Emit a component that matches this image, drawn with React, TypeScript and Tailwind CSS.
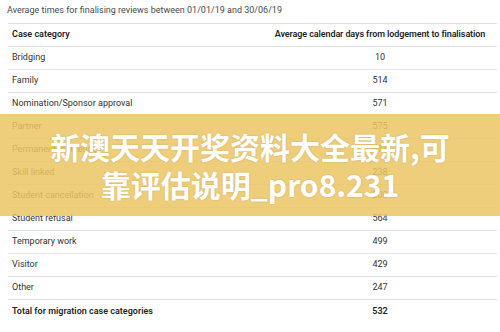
import React from 'react'

const rows: [string, string][] = [
  ['Bridging', '10'],
  ['Family', '514'],
  ['Nomination/Sponsor approval', '571'],
  ['Partner', '575'],
  ['Permanent residence', '471'],
  ['Skill linked', '238'],
  ['Student cancellation', '200'],
  ['Student refusal', '564'],
  ['Temporary work', '499'],
  ['Visitor', '429'],
  ['Other', '247'],
]

export default function App() {
  return (
    <div className="relative w-[500px] h-[332px] overflow-hidden bg-white font-['Roboto',sans-serif]">
      <div className="pl-[7px] pt-[4px] h-[23px] text-[9px] leading-[12px] text-[#4a4a4a] whitespace-nowrap">
        Average times for finalising reviews between 01/01/19 and 30/06/19
      </div>

      <table className="ml-[8px] w-[489px] border-collapse text-[9px] text-[#333]">
        <colgroup>
          <col className="w-[255px]" />
          <col className="w-[234px]" />
        </colgroup>
        <thead>
          <tr className="h-[23px] border-y border-[#e2e2e2]">
            <th className="pl-[4px] text-left font-semibold text-[#1f1f1f] whitespace-nowrap">Case category</th>
            <th className="text-center font-semibold text-[#1f1f1f] whitespace-nowrap tracking-[-0.1px]">
              Average calendar days from lodgement to finalisation
            </th>
          </tr>
        </thead>
        <tbody>
          {rows.map(([name, days]) => (
            <tr key={name} className="h-[23px] border-b border-[#e2e2e2]">
              <td className="pl-[4px] whitespace-nowrap">{name}</td>
              <td className="text-center">{days}</td>
            </tr>
          ))}
          <tr className="h-[23px]">
            <td className="pl-[4px] font-semibold text-[#1f1f1f] whitespace-nowrap">Total for migration case categories</td>
            <td className="text-center font-semibold text-[#1f1f1f]">532</td>
          </tr>
        </tbody>
      </table>

      {/* 上に重なる帯 */}
      <div className="absolute left-0 top-[114px] w-[500px] h-[102px] bg-[#ebc664]/85 flex flex-col items-center justify-center">
        <div className="text-white font-bold text-[30px] leading-[38px] font-['Noto_Sans_CJK_SC',sans-serif] text-center [text-shadow:0_0_2px_rgba(0,0,0,0.15)]">
          <div>新澳天天开奖资料大全最新,可</div>
          <div>靠评估说明_pro8.231</div>
        </div>
      </div>
    </div>
  )
}
